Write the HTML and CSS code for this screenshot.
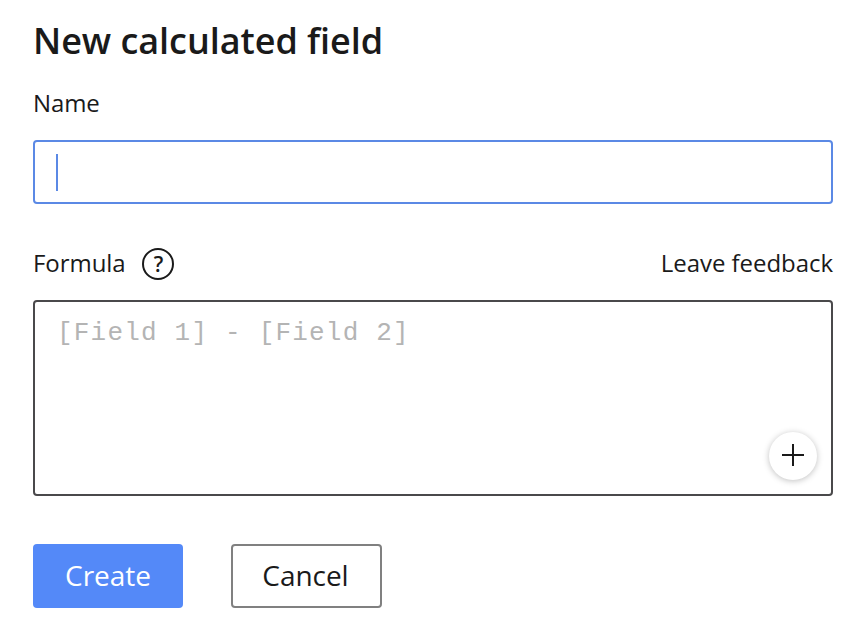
FILE: index.html
```html
<!DOCTYPE html>
<html lang="en">
<head>
<meta charset="utf-8">
<title>New calculated field</title>
<link rel="stylesheet" href="styles.css">
</head>
<body>
<main class="dialog">
  <h1 class="title">New calculated field</h1>
  <div class="label">Name</div>
  <div class="name-input"><span class="caret"></span></div>
  <div class="formula-head">
    <span class="formula-label">Formula</span>
    <svg class="help" viewBox="0 0 32 32" width="32" height="32"><circle cx="16" cy="16" r="15" fill="none" stroke="#1a1a1a" stroke-width="2"/><text x="16.4" y="23.5" text-anchor="middle" class="help-mark">?</text></svg>
    <span class="feedback">Leave feedback</span>
  </div>
  <div class="editor">
    <span class="placeholder">[Field 1] - [Field 2]</span>
    <span class="add"><svg viewBox="0 0 24 24" width="24" height="24"><path d="M12 0v22M1 11h22" stroke="#1a1a1a" stroke-width="2"/></svg></span>
  </div>
  <div class="actions">
    <button class="btn primary">Create</button>
    <button class="btn secondary">Cancel</button>
  </div>
</main>
</body>
</html>
```
FILE: styles.css
```css
* { box-sizing: border-box; }
body { margin: 0; background: #fff; color: #1a1a1a; font-family: "Open Sans", sans-serif; }
.dialog { width: 868px; height: 638px; padding: 16px 35px 0 33px; }
.title { margin: 0; height: 50px; line-height: 50px; font-size: 36px; font-weight: 600; letter-spacing: -0.05px; white-space: nowrap; }
.label { margin-top: 19px; height: 36px; line-height: 36px; font-size: 24px; letter-spacing: -0.1px; }
.name-input { margin-top: 19px; height: 64px; padding: 12px 21px; border: 2px solid #5b89e5; border-radius: 4px; }
.caret { display: block; width: 2px; height: 37px; background: #5b89e5; }
.formula-head { display: flex; align-items: center; margin-top: 42px; height: 36px; font-size: 24px; line-height: 32px; letter-spacing: -0.05px; }
.formula-label, .feedback { padding-bottom: 3px; }
.help { margin-left: 16px; }
.help-mark { font-size: 21px; font-weight: 600; fill: #1a1a1a; }
.feedback { margin-left: auto; }
.editor { display: flex; justify-content: space-between; align-items: flex-end; margin-top: 18px; height: 196px; padding: 15px 14px 14px 22px; border: 2px solid #4a494b; border-radius: 4px; }
.placeholder { align-self: flex-start; font: 26px/32px "Courier New", "Liberation Mono", monospace; letter-spacing: 1.2px; color: #b4b4b4; white-space: pre; }
.add { display: flex; align-items: center; justify-content: center; width: 48px; height: 48px; border-radius: 50%; background: #fff; box-shadow: 0 1px 6px rgba(0,0,0,.25); }
.actions { display: flex; gap: 48px; margin-top: 48px; }
.btn { height: 64px; padding: 0 0 2px; font: 28px/38px "Open Sans", sans-serif; letter-spacing: -0.05px; border-radius: 4px; }
.primary { width: 150px; border: 0; background: #5489f8; color: #fff; }
.secondary { width: 151px; padding-right: 2px; border: 2px solid #808080; background: #fff; color: #1a1a1a; }
```
